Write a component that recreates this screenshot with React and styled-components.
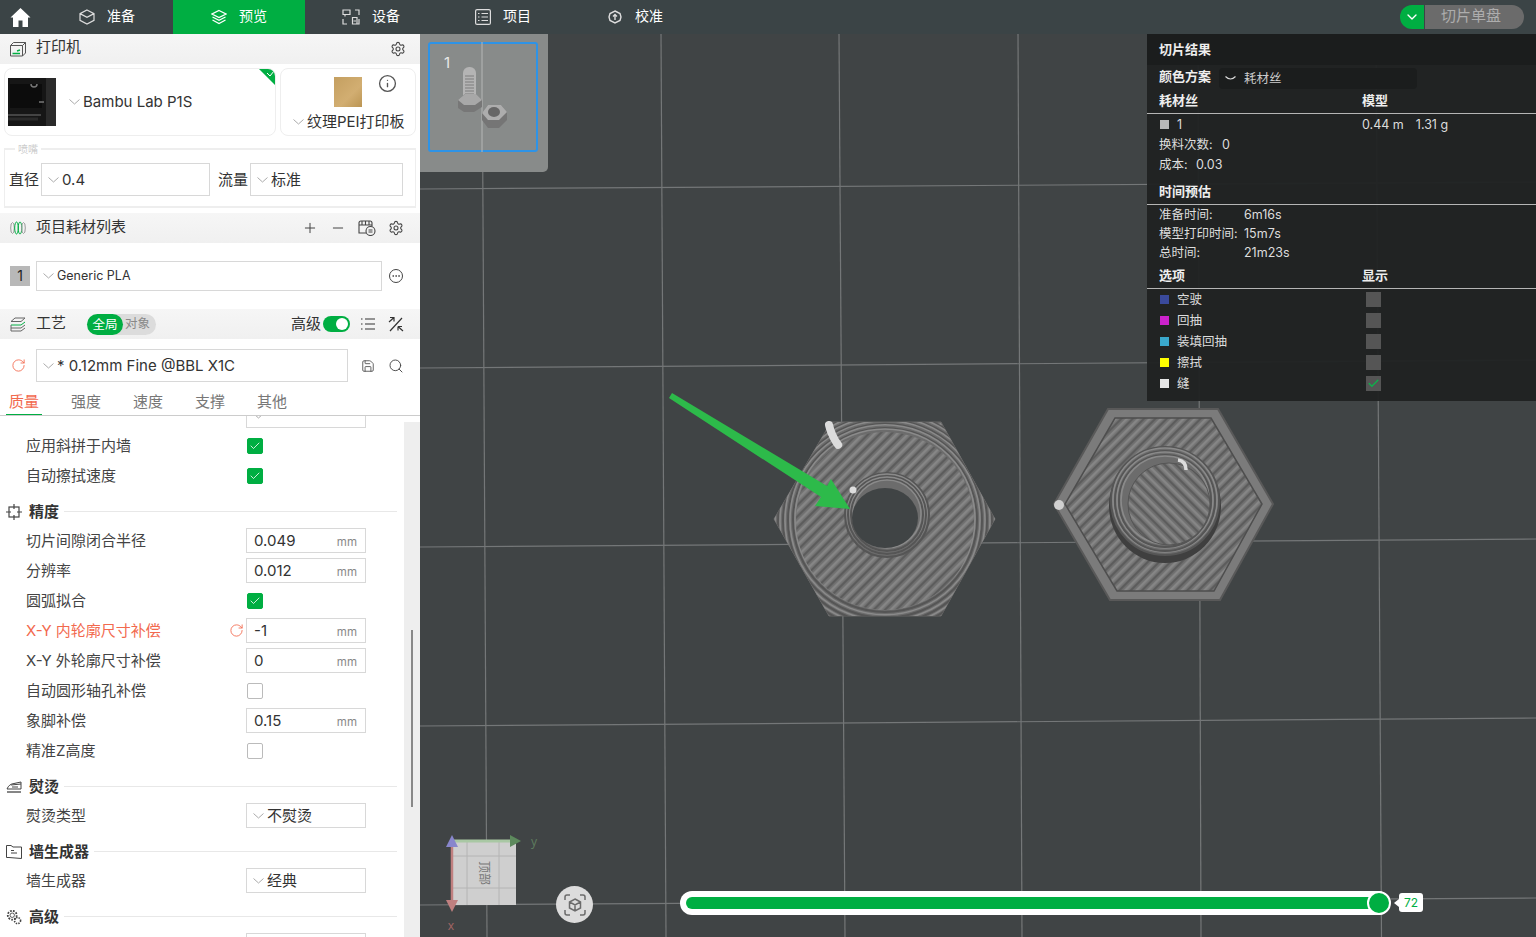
import React from 'react';
import styled, { createGlobalStyle } from 'styled-components';
import { Settings, Plus, Minus, Search, Save, Info, RotateCw, Check, ChevronDown, Ellipsis } from 'lucide-react';

const GREEN = '#00ae42';
const RED = '#f2694e';

const GlobalStyle = createGlobalStyle`
  html, body { margin: 0; padding: 0; height: 100%; overflow: hidden; background: #fff; }
  body { font-family: Inter, "Noto Sans CJK SC", sans-serif; font-size: 15px; line-height: 20px; color: #333; }
  * { box-sizing: border-box; }
`;

const Page = styled.div`
  width: 1536px;
  height: 937px;
  display: flex;
  flex-direction: column;
  overflow: hidden;
`;

/* top bar */
const TopBar = styled.div`
  height: 34px;
  flex: none;
  background: #3b4446;
  display: flex;
  align-items: stretch;
`;
const HomeButton = styled.div`
  width: 41px;
  display: flex;
  align-items: center;
  justify-content: center;
`;
const NavTab = styled.div`
  width: 132px;
  display: flex;
  align-items: center;
  justify-content: center;
  gap: 12px;
  color: #fff;
  font-size: 14px;
  background: ${(p) => (p.$active ? GREEN : 'transparent')};
`;
const NavLabel = styled.span`
  margin-bottom: 3px;
`;
const SliceGroup = styled.div`
  margin-left: auto;
  margin-right: 12px;
  display: flex;
  align-items: center;
  gap: 1px;
`;
const SliceArrow = styled.div`
  width: 24px;
  height: 24px;
  background: ${GREEN};
  border-radius: 12px 0 0 12px;
  display: flex;
  align-items: center;
  justify-content: center;
  color: #fff;
`;
const SliceButton = styled.div`
  width: 99px;
  height: 24px;
  background: #6b6b6b;
  border-radius: 0 12px 12px 0;
  color: #adadad;
  font-size: 15px;
  line-height: 22px;
  padding-left: 16px;
`;

const Body = styled.div`
  flex: 1;
  display: flex;
  min-height: 0;
`;

/* left panel */
const Sidebar = styled.div`
  width: 420px;
  flex: none;
  background: #fff;
  display: flex;
  flex-direction: column;
  overflow: hidden;
`;
const PanelHeader = styled.div`
  height: 30px;
  flex: none;
  margin-top: ${(p) => p.$top || 0}px;
  background: linear-gradient(#f6f6f6, #f0f0f0);
  display: flex;
  align-items: center;
  padding: 0 ${(p) => p.$right || 16}px 0 10px;
  color: #333;
`;
const HeaderTitle = styled.span`
  margin-left: 10px;
  margin-bottom: ${(p) => p.$lift || 2}px;
  font-size: 15px;
`;
const HeaderTools = styled.div`
  margin-left: auto;
  display: flex;
  align-items: center;
  gap: ${(p) => p.$gap || 12}px;
  color: #444;
`;

const CardRow = styled.div`
  display: flex;
  gap: 4px;
  padding: 0 4px;
  margin-top: 4px;
  height: 68px;
`;
const PrinterCard = styled.div`
  position: relative;
  width: 272px;
  border: 1px solid #eee;
  border-radius: 8px;
  display: flex;
  align-items: center;
  padding-left: 3px;
  overflow: hidden;
  font-size: 15px;
`;
const PrinterThumb = styled.svg`
  width: 48px;
  height: 48px;
  flex: none;
  margin-right: 13px;
`;
const CornerFlag = styled.svg`
  position: absolute;
  top: -1px;
  right: -1px;
`;
const PlateCard = styled.div`
  position: relative;
  width: 136px;
  border: 1px solid #eee;
  border-radius: 8px;
  display: flex;
  flex-direction: column;
  align-items: center;
  padding-top: 8px;
`;
const PlateSwatch = styled.div`
  width: 28px;
  height: 30px;
  background: linear-gradient(135deg, #c49f60, #d2ae72 60%, #bb9553);
`;
const PlateLabel = styled.div`
  margin-top: 5px;
  display: flex;
  align-items: center;
  align-self: flex-start;
  padding-left: 12px;
  line-height: 20px;
  white-space: nowrap;
`;
const InfoSpot = styled.div`
  position: absolute;
  top: 5px;
  right: 18px;
  color: #555;
  display: flex;
`;
const ChevronMark = styled.svg`
  width: 11px;
  height: 6px;
  flex: none;
  margin-right: 3px;
  fill: none;
  stroke: #aaa;
  stroke-width: 1;
`;
const Chevron = () => (
  <ChevronMark viewBox="0 0 11 6">
    <path d="M0.5 0.5 L5.5 5 L10.5 0.5" />
  </ChevronMark>
);

const Nozzle = styled.fieldset`
  margin: 8px 4px 0;
  padding: 0 0 0 4px;
  height: 64px;
  border: 1px solid #eee;
  border-width: 2px 1px 2px 1px;
`;
const NozzleLegend = styled.legend`
  margin-left: 6px;
  padding: 0 3px;
  font-size: 10px;
  line-height: 10px;
  color: #ccc;
`;
const NozzleRow = styled.div`
  display: flex;
  align-items: center;
  margin-top: 9px;
`;
const FieldLabel = styled.span`
  width: ${(p) => p.$w}px;
  padding-left: ${(p) => p.$pad || 0}px;
  flex: none;
  font-size: 15px;
  color: #333;
`;
const SelectBox = styled.div`
  width: ${(p) => p.$w}px;
  height: ${(p) => p.$h}px;
  flex: none;
  border: 1px solid #d8d8d8;
  display: flex;
  align-items: center;
  padding-left: ${(p) => p.$pad || 6}px;
  font-size: ${(p) => p.$size || 15}px;
  color: #333;
  white-space: nowrap;
`;

const FilamentRow = styled.div`
  height: 66px;
  flex: none;
  display: flex;
  align-items: center;
  padding-left: 10px;
`;
const FilamentIndex = styled.div`
  width: 20px;
  height: 20px;
  margin-right: 6px;
  background: #b8b8b8;
  text-align: center;
  line-height: 20px;
  font-size: 14px;
  color: #222;
`;
const MoreDot = styled.div`
  margin-left: 7px;
  width: 14px;
  height: 14px;
  border: 1.3px solid #444;
  border-radius: 50%;
  color: #444;
  display: flex;
  align-items: center;
  justify-content: center;
`;

const ModeSwitch = styled.div`
  margin-left: 21px;
  width: 69px;
  height: 21px;
  border-radius: 11px;
  background: #dcdcdc;
  display: flex;
  align-items: center;
  font-size: 12.5px;
  color: #888;
`;
const ModeActive = styled.span`
  width: 36px;
  height: 21px;
  line-height: 21px;
  text-align: center;
  border-radius: 11px;
  background: ${GREEN};
  color: #fff;
  margin-right: 2px;
`;
const AdvancedGroup = styled.div`
  display: flex;
  align-items: center;
  gap: 2px;
  margin-right: -2px;
`;
const ToggleTrack = styled.div`
  width: 27px;
  height: 16px;
  border-radius: 8px;
  background: ${GREEN};
  display: flex;
  align-items: center;
  justify-content: flex-end;
  padding-right: 2px;
`;
const ToggleKnob = styled.div`
  width: 12px;
  height: 12px;
  border-radius: 50%;
  background: #fff;
`;
const AdvancedLabel = styled.span`
  font-size: 15px;
  color: #333;
`;

const PresetRow = styled.div`
  height: 51px;
  flex: none;
  padding-top: 10px;
  display: flex;
  align-items: flex-start;
`;
const ResetSpot = styled.div`
  width: 36px;
  height: 33px;
  display: flex;
  align-items: center;
  justify-content: center;
  color: ${RED};
`;
const PresetTools = styled.div`
  height: 33px;
  display: flex;
  align-items: center;
  gap: 13px;
  margin-left: 13px;
  color: #444;
`;

const TabBar = styled.div`
  height: 26px;
  flex: none;
  display: flex;
  padding-left: 9px;
  gap: 32px;
  border-bottom: 1px solid #ccc;
`;
const SettingTab = styled.div`
  position: relative;
  font-size: 15px;
  line-height: 24px;
  color: ${(p) => (p.$active ? RED : '#777')};
  ${(p) =>
    p.$active &&
    `&::after {
      content: '';
      position: absolute;
      left: -3px;
      right: -3px;
      bottom: 0;
      height: 1px;
      background: ${GREEN};
    }`}
`;

const ScrollArea = styled.div`
  flex: 1;
  min-height: 0;
  display: flex;
  overflow: hidden;
`;
const OptionList = styled.div`
  width: 404px;
  flex: none;
  padding: 0 7px 0 6px;
  margin-top: -15.5px;
`;
const ScrollTrack = styled.div`
  width: 16px;
  flex: none;
  margin-top: 6px;
  background: #eee;
  padding: 208px 0 0 7px;
`;
const ScrollThumb = styled.div`
  width: 2px;
  height: 177px;
  background: #888;
`;
const SectionRow = styled.div`
  height: 35px;
  padding-top: 7px;
  display: flex;
  align-items: center;
  gap: 7px;
  font-size: 15px;
  font-weight: 700;
  color: #333;
`;
const SectionLine = styled.div`
  flex: 1;
  height: 1px;
  background: #e8e8e8;
  margin-left: -2px;
`;
const OptionRow = styled.div`
  height: 30px;
  padding-left: 20px;
  display: flex;
  align-items: center;
`;
const OptionLabel = styled.div`
  width: 200px;
  flex: none;
  font-size: 15px;
  color: ${(p) => (p.$changed ? RED : '#444')};
  white-space: nowrap;
`;
const ResetSlot = styled.div`
  width: 20px;
  flex: none;
  color: ${RED};
  display: flex;
  padding-left: 3px;
`;
const NumberBox = styled.div`
  width: 120px;
  height: 25px;
  border: 1px solid #d8d8d8;
  display: flex;
  align-items: center;
  justify-content: space-between;
  padding: 0 8px 0 7px;
  font-size: 15px;
  color: #333;
`;
const Unit = styled.span`
  font-size: 11.5px;
  color: #888;
  padding-top: 2px;
`;
const CheckBox = styled.div`
  width: 16px;
  height: 16px;
  margin-left: 1px;
  border-radius: 2px;
  border: 1px solid ${(p) => (p.$on ? GREEN : '#bbb')};
  background: ${(p) => (p.$on ? GREEN : '#fff')};
  color: #fff;
  display: flex;
  align-items: center;
  justify-content: center;
`;

/* viewport */
const Viewport = styled.div`
  position: relative;
  flex: 1;
  background: #404445;
  overflow: hidden;
`;
const SceneSvg = styled.svg`
  position: absolute;
  inset: 0;
  display: block;
`;
const PlateTray = styled.div`
  position: absolute;
  left: 0;
  top: 0;
  width: 128px;
  height: 138px;
  padding: 8px;
  background: #888b8a;
  border-radius: 0 0 5px 0;
`;
const PlateThumb = styled.div`
  position: relative;
  width: 110px;
  height: 110px;
  border: 2px solid #2e93e6;
  border-radius: 3px;
`;
const PlateNumber = styled.span`
  position: absolute;
  left: 14px;
  top: 9px;
  color: #e8e8e8;
  font-size: 15px;
  line-height: 20px;
`;
const PlateModels = styled.svg`
  position: absolute;
  inset: -2px;
`;

const ResultPanel = styled.div`
  position: absolute;
  right: 0;
  top: 0;
  width: 389px;
  height: 367px;
  background: rgba(32, 34, 34, 0.96);
  color: #ddd;
  font-size: 12.5px;
`;
const ResultTitle = styled.div`
  height: 31px;
  background: #1b1d1d;
  padding-left: 12px;
  line-height: 31px;
  font-size: 13px;
  font-weight: 700;
  color: #eee;
`;
const SchemeRow = styled.div`
  height: 24px;
  padding: 0 0 2px 12px;
  display: flex;
  align-items: center;
  font-size: 13px;
  font-weight: 700;
  color: #eee;
`;
const SchemeSelect = styled.div`
  width: 198px;
  height: 21px;
  margin-left: 8px;
  margin-top: 5px;
  border-radius: 4px;
  background: #1b1d1d;
  display: flex;
  align-items: center;
  gap: 8px;
  padding-left: 6px;
  font-size: 12.5px;
  font-weight: 400;
  color: #ccc;
`;
const ResultHead = styled.div`
  height: 25px;
  margin-top: ${(p) => p.$top || 0}px;
  padding: 0 0 2px 12px;
  display: grid;
  grid-template-columns: 203px 1fr;
  align-items: center;
  border-bottom: 1px solid #b5b5b5;
  font-size: 13px;
  font-weight: 700;
  color: #eee;
`;
const ResultRow = styled.div`
  height: ${(p) => p.$h || 19}px;
  padding-left: 12px;
  display: grid;
  grid-template-columns: ${(p) => p.$cols || '203px 1fr'};
  align-items: center;
  white-space: nowrap;
`;
const LegendCell = styled.div`
  display: flex;
  align-items: center;
`;
const LegendSwatch = styled.span`
  width: 9px;
  height: 9px;
  flex: none;
  margin: 0 8px 0 1px;
  background: ${(p) => p.$color};
`;
const ShowBox = styled.div`
  width: 15px;
  height: 15px;
  margin-left: 4px;
  background: #555;
  color: #0fb04c;
  display: flex;
  align-items: center;
  justify-content: center;
`;
const Amounts = styled.div`
  display: flex;
  gap: 12px;
`;

const CameraButton = styled.div`
  position: absolute;
  left: 136px;
  top: 852px;
  width: 37px;
  height: 37px;
  border-radius: 50%;
  background: #dcdcdc;
  display: flex;
  align-items: center;
  justify-content: center;
`;
const SliderTrack = styled.div`
  position: absolute;
  left: 260px;
  top: 857px;
  width: 710px;
  height: 24px;
  border-radius: 12px;
  background: #fff;
  padding: 6px;
`;
const SliderFill = styled.div`
  width: 693px;
  height: 12px;
  border-radius: 6px;
  background: ${GREEN};
`;
const SliderKnob = styled.div`
  position: absolute;
  left: 687px;
  top: 0;
  width: 24px;
  height: 24px;
  border-radius: 50%;
  border: 2px solid #fff;
  background: ${GREEN};
`;
const SliderTip = styled.div`
  position: absolute;
  left: 979px;
  top: 859px;
  width: 24px;
  height: 19px;
  border-radius: 3px;
  background: #fff;
  color: ${GREEN};
  font-size: 12px;
  line-height: 19px;
  text-align: center;
  &::before {
    content: '';
    position: absolute;
    left: -5px;
    top: 6px;
    border-style: solid;
    border-width: 4px 5px 4px 0;
    border-color: transparent #fff transparent transparent;
  }
`;

const line = { fill: 'none', stroke: 'currentColor', strokeWidth: 1.2 };

const CubeIcon = () => (
  <svg width="16" height="16" viewBox="0 0 16 16" {...line} color="#ddd">
    <path d="M8 1 L15 4.6 V11.4 L8 15 L1 11.4 V4.6 Z M1 4.6 L8 8.4 L15 4.6" />
  </svg>
);
const LayersIcon = () => (
  <svg width="16" height="16" viewBox="0 0 16 16" {...line} color="#fff">
    <path d="M8 1.5 L15 5 L8 8.5 L1 5 Z M1.5 8 L8 11.4 L14.5 8 M1.5 11 L8 14.5 L14.5 11" />
  </svg>
);
const DeviceIcon = () => (
  <svg width="18" height="16" viewBox="0 0 18 16" {...line} color="#ddd">
    <path d="M1 1 H8 V5.5 H1 Z M3 6 V7.5 M1 10 V15 H5 M13 1 H17 V6 M13 15 H17 V10 M10.5 8.5 H15 V15 H10.5 Z M11.5 12 H14" />
  </svg>
);
const ListIcon = () => (
  <svg width="16" height="16" viewBox="0 0 16 16" {...line} color="#ddd">
    <rect x="0.6" y="0.6" width="14.8" height="14.8" rx="1.5" />
    <path d="M3 4.5 H4.5 M6.5 4.5 H13 M3 8 H4.5 M6.5 8 H13 M3 11.5 H4.5 M6.5 11.5 H13" />
  </svg>
);
const CalibIcon = () => (
  <svg width="16" height="16" viewBox="0 0 16 16" {...line} color="#ddd">
    <path d="M8 2 L13 4.5 L14 8 L13 11.5 L8 14 L3 11.5 L2 8 L3 4.5 Z" strokeWidth="1.4" />
    <path d="M8 11 V6 M6 7.6 L8 5.6 L10 7.6" strokeWidth="1.4" />
  </svg>
);
const PrinterIcon = () => (
  <svg width="16" height="15" viewBox="0 0 16 15" fill="none" stroke="#555" strokeWidth="1">
    <path d="M0.5 3.5 H12.5 V14 H0.5 Z M0.5 3.5 L3.5 0.5 H15.5 V11 L12.5 14 M12.5 3.5 L15.5 0.5" />
    <path d="M2.5 11.5 H10 M7 9 L10 8" stroke={GREEN} strokeWidth="1.4" />
  </svg>
);
const SpoolIcon = () => (
  <svg width="16" height="14" viewBox="0 0 16 14" fill="none" strokeWidth="1">
    <ellipse cx="2.5" cy="7" rx="1.8" ry="5.5" stroke="#999" />
    <ellipse cx="6.5" cy="7" rx="1.8" ry="6" stroke={GREEN} />
    <ellipse cx="10" cy="7" rx="1.8" ry="6" stroke={GREEN} />
    <ellipse cx="13.5" cy="7" rx="1.8" ry="5.5" stroke="#999" />
  </svg>
);
const ProcessIcon = () => (
  <svg width="16" height="15" viewBox="0 0 16 15" fill="none" stroke="#666" strokeWidth="1">
    <path d="M1 4.5 L5 1 H15 L11 4.5 H1 Z" />
    <path d="M1 8 H11 L15 5" stroke={GREEN} />
    <path d="M1 11 H11 L15 8 M1 8 V14 H11 L15 11" />
  </svg>
);
const StockIcon = () => (
  <svg width="18" height="16" viewBox="0 0 18 16" fill="none" stroke="#444" strokeWidth="1.1">
    <path d="M8 13 H1 V3 Q1 1 3 1 H12 Q14 1 14 3 V6 M1 5 H14 M4 1 V5 M7.5 1 V5 M11 1 V5" />
    <circle cx="12.5" cy="11" r="4.5" />
    <path d="M10.5 10 H14.5 M10.5 12 H14.5" />
  </svg>
);
const LinesIcon = () => (
  <svg width="16" height="14" viewBox="0 0 16 14" fill="none" stroke="#333" strokeWidth="1.2">
    <path d="M1 2 H2.5 M5 2 H15 M1 7 H2.5 M5 7 H15 M1 12 H2.5 M5 12 H15" />
  </svg>
);
const CompareIcon = () => (
  <svg width="16" height="16" viewBox="0 0 16 16" fill="none" stroke="#333" strokeWidth="1.2">
    <path d="M2 1.5 H6 V5.5 M1 6 L6 1.5 M2 15 L14 2 M10 10.5 V14.5 M10 10.5 H14 M10 10.5 L15 15" />
  </svg>
);
const PrecisionIcon = () => (
  <svg width="16" height="16" viewBox="0 0 16 16" fill="none" stroke="#444" strokeWidth="1.2">
    <rect x="3" y="3" width="10" height="10" />
    <path d="M8 0 V5 M8 11 V16 M0 8 H5 M11 8 H16" />
  </svg>
);
const IronIcon = () => (
  <svg width="16" height="12" viewBox="0 0 16 12" fill="none" stroke="#444" strokeWidth="1">
    <path d="M1 8 Q3 3 8 2.5 L15 1 V8 Z M6 6 H12 M5 4 L15 3" />
    <path d="M1 11 H15" strokeWidth="1.3" />
  </svg>
);
const WallIcon = () => (
  <svg width="16" height="14" viewBox="0 0 16 14" fill="none" stroke="#444" strokeWidth="1">
    <path d="M0.5 0.5 H5 L7 2 H15.5 V13.5 L3 12.5 H0.5 Z M5 5.5 H8 M5 8 H11" />
  </svg>
);
const GearsIcon = () => (
  <svg width="16" height="16" viewBox="0 0 18 18" fill="none" stroke="#444">
    <circle cx="7" cy="7" r="5" strokeWidth="2" strokeDasharray="2 1.4" />
    <circle cx="7" cy="7" r="2.5" strokeWidth="1" />
    <circle cx="13" cy="13" r="3.4" strokeWidth="1.8" strokeDasharray="1.6 1.2" />
  </svg>
);
const SchemeChevron = () => (
  <svg width="11" height="5" viewBox="0 0 11 5" fill="none" stroke="#ddd" strokeWidth="1.1">
    <path d="M0.5 0.5 Q5.5 5.5 10.5 0.5" />
  </svg>
);

const Bambu = () => (
  <PrinterThumb viewBox="0 0 48 48">
    <rect width="48" height="48" fill="#161616" />
    <rect x="38" y="0" width="10" height="48" fill="#2b2b2b" />
    <rect x="2" y="6" width="32" height="24" fill="#0c0c0c" />
    <path d="M0 37 H33" stroke="#555" strokeWidth="1.5" />
    <path d="M23 6 a3 3 0 0 0 6 0 M31 24 h5" stroke="#777" strokeWidth="1.5" fill="none" />
    <path d="M0 41 H30" stroke="#2a2a2a" strokeWidth="3" />
  </PrinterThumb>
);

const hexPoints = (pts) => pts.map((p) => p.join(',')).join(' ');
const NUT_A = [[831, 422], [941, 422], [995, 519], [941, 616], [829, 616], [774, 519]];
const NUT_B = [[1108, 409], [1218, 409], [1273, 504], [1220, 600], [1110, 600], [1054, 504]];
const NUT_B_IN = [[1115, 418], [1211, 418], [1262, 504], [1214, 591], [1117, 591], [1065, 504]];

const GRID = [
  [420, 189, 1536, 182], [420, 368, 1536, 360], [420, 547, 1536, 539], [420, 726, 1536, 718], [420, 905, 1536, 898],
  [482, 34, 487, 937], [661, 34, 666, 937], [839, 34, 845, 937], [1018, 34, 1022, 937], [1198, 34, 1201, 937], [1376, 34, 1381.5, 937],
];

const StripeDef = ({ id, angle }) => (
  <pattern id={id} width="8" height="8" patternUnits="userSpaceOnUse" patternTransform={`rotate(${angle})`}>
    <rect width="8" height="8" fill="#727272" />
    <rect y="0" width="8" height="2.2" fill="#5c5c5c" />
    <rect y="4" width="8" height="2.4" fill="#868686" />
  </pattern>
);

const Rings = ({ cx, cy, from, to, step = 5, drop = 0 }) => {
  const out = [];
  for (let r = to, i = Math.round((to - from) / step); r >= from; r -= step, i--) {
    out.push(
      <g key={r}>
        <circle cx={cx} cy={cy + i * drop} r={r} fill="#6c6c6c" stroke="#555" strokeWidth="2" />
        <circle cx={cx} cy={cy + i * drop - 1} r={r - 2} fill="none" stroke="#8a8a8a" strokeWidth="1.6" />
      </g>
    );
  }
  return out;
};

const Scene = () => (
  <SceneSvg width="1116" height="903" viewBox="420 34 1116 903">
    <defs>
      <StripeDef id="diagA" angle={-45} />
      <StripeDef id="diagB" angle={45} />
      <clipPath id="nutAclip"><polygon points={hexPoints(NUT_A)} /></clipPath>
    </defs>
    {GRID.map(([a, b, c, d]) => (
      <line key={`${a}-${b}`} x1={a} y1={b} x2={c} y2={d} stroke="#747778" strokeWidth="1.2" />
    ))}

    <polygon points={hexPoints(NUT_A)} fill="url(#diagA)" stroke="#666" />
    <g clipPath="url(#nutAclip)">
      <Rings cx={885} cy={520} from={92} to={112} drop={0.8} />
    </g>
    <circle cx="885" cy="521" r="89" fill="url(#diagA)" />
    <Rings cx={887} cy={515} from={35} to={42} step={3} />
    <ellipse cx="885" cy="518" rx="33" ry="30" fill="#404445" />
    <path d="M829 425 Q832 437 839 446" stroke="#dcdcdc" strokeWidth="8" strokeLinecap="round" strokeDasharray="4 2" fill="none" />
    <circle cx="853" cy="490" r="3.5" fill="#ddd" />

    <polygon points={hexPoints(NUT_B)} fill="#7b7b7b" stroke="#595959" strokeWidth="2" />
    <polygon points={hexPoints(NUT_B_IN)} fill="url(#diagA)" stroke="#4e4e4e" strokeWidth="1.5" />
    <ellipse cx="1165" cy="506" rx="56" ry="57" fill="#3f3f3f" />
    <Rings cx={1165} cy={501} from={44} to={54} step={4} />
    <ellipse cx="1169" cy="504" rx="41" ry="41" fill="url(#diagB)" stroke="#555" />
    <path d="M1178 460 Q1186 461 1186 470" stroke="#ddd" strokeWidth="3.5" fill="none" />
    <circle cx="1059" cy="505" r="5" fill="#d0d0d0" />

    <polygon points="672,393 827,486 831,479 850,509 815,506 821,497 669,398" fill="#2dba4a" />

    <rect x="453" y="840" width="63" height="65" fill="#cfcfcf" />
    <path d="M467 841 V905 M499 841 V905 M453 856 H516 M453 888 H516" stroke="#b4b4b4" />
    <text transform="translate(480 873) rotate(90)" textAnchor="middle" fontSize="12" fill="#777" fontFamily="Noto Sans CJK SC, sans-serif">顶部</text>
    <path d="M453 841 H512" stroke="#a9c8a4" strokeWidth="3" />
    <polygon points="510,835 521,841 510,847" fill="#5d8a5d" />
    <path d="M452 846 V905" stroke="#c08080" strokeWidth="2.5" />
    <polygon points="446,847 452,835 458,847" fill="#8886cc" />
    <polygon points="446,900 458,900 452,912" fill="#c08080" />
    <text x="451" y="930" textAnchor="middle" fontSize="12" fill="#a06464" fontFamily="Noto Sans, sans-serif">x</text>
    <text x="534" y="846" textAnchor="middle" fontSize="12" fill="#5d7a5d" fontFamily="Noto Sans, sans-serif">y</text>
  </SceneSvg>
);

const ThumbModels = () => (
  <PlateModels width="110" height="110" viewBox="428 42 110 110">
    <path d="M482 42 V152" stroke="#b5b7b6" strokeWidth="1" />
    <rect x="463" y="67" width="13" height="34" rx="6" fill="#b4b4b4" />
    <path d="M465 76 H474 M465 79 H474 M465 82 H474 M465 85 H474 M465 88 H474 M465 91 H474 M465 94 H474" stroke="#7d7d7d" strokeWidth="1" />
    <path d="M458 100 L465 94 H476 L482 100 V107 L474 112 H464 L458 108 Z" fill="#777" />
    <path d="M458 100 L465 94 H476 L482 100 L475 105 H464 Z" fill="#a8a8a8" />
    <path d="M482 113 L488 105 H501 L507 112 V120 L499 128 H488 L482 120 Z" fill="#757575" />
    <path d="M482 113 L488 105 H501 L507 112 L499 120 H488 Z" fill="#adadad" />
    <ellipse cx="494" cy="112" rx="6" ry="5" fill="#666" />
  </PlateModels>
);

const OPTIONS = [
  { kind: 'select', label: '', value: '' },
  { kind: 'check', label: '应用斜拼于内墙', on: true },
  { kind: 'check', label: '自动擦拭速度', on: true },
  { kind: 'section', label: '精度', icon: <PrecisionIcon /> },
  { kind: 'num', label: '切片间隙闭合半径', value: '0.049' },
  { kind: 'num', label: '分辨率', value: '0.012' },
  { kind: 'check', label: '圆弧拟合', on: true },
  { kind: 'num', label: 'X-Y 内轮廓尺寸补偿', value: '-1', changed: true },
  { kind: 'num', label: 'X-Y 外轮廓尺寸补偿', value: '0' },
  { kind: 'check', label: '自动圆形轴孔补偿', on: false },
  { kind: 'num', label: '象脚补偿', value: '0.15' },
  { kind: 'check', label: '精准Z高度', on: false },
  { kind: 'section', label: '熨烫', icon: <IronIcon /> },
  { kind: 'select', label: '熨烫类型', value: '不熨烫' },
  { kind: 'section', label: '墙生成器', icon: <WallIcon /> },
  { kind: 'select', label: '墙生成器', value: '经典' },
  { kind: 'section', label: '高级', icon: <GearsIcon /> },
  { kind: 'select', label: '', value: '' },
];

const Option = ({ item }) => {
  if (item.kind === 'section') {
    return (
      <SectionRow>
        {item.icon}
        <span>{item.label}</span>
        <SectionLine />
      </SectionRow>
    );
  }
  return (
    <OptionRow>
      <OptionLabel $changed={item.changed}>{item.label}</OptionLabel>
      <ResetSlot>{item.changed && <RotateCw size={15} strokeWidth={1.4} />}</ResetSlot>
      {item.kind === 'check' && (
        <CheckBox $on={item.on}>{item.on && <Check size={12} strokeWidth={1.6} />}</CheckBox>
      )}
      {item.kind === 'num' && (
        <NumberBox>
          <span>{item.value}</span>
          <Unit>mm</Unit>
        </NumberBox>
      )}
      {item.kind === 'select' && (
        <SelectBox $w={120} $h={25} $pad={6}>
          <Chevron />
          {item.value}
        </SelectBox>
      )}
    </OptionRow>
  );
};

const LEGEND = [
  { label: '空驶', color: '#3a4a9c' },
  { label: '回抽', color: '#cc22cc' },
  { label: '装填回抽', color: '#3aa8cc' },
  { label: '擦拭', color: '#ffff00' },
  { label: '缝', color: '#e6e6e6', on: true },
];

export default function App() {
  return (
    <Page>
      <GlobalStyle />
      <TopBar>
        <HomeButton>
          <svg width="21" height="21" viewBox="0 0 21 21" fill="#fff">
            <path d="M10.5 1 L0.5 10.5 H3 V20 H8.5 V13.5 H12.5 V20 H18 V10.5 H20.5 Z" />
          </svg>
        </HomeButton>
        <NavTab><CubeIcon /><NavLabel>准备</NavLabel></NavTab>
        <NavTab $active><LayersIcon /><NavLabel>预览</NavLabel></NavTab>
        <NavTab><DeviceIcon /><NavLabel>设备</NavLabel></NavTab>
        <NavTab><ListIcon /><NavLabel>项目</NavLabel></NavTab>
        <NavTab><CalibIcon /><NavLabel>校准</NavLabel></NavTab>
        <SliceGroup>
          <SliceArrow><ChevronDown size={16} strokeWidth={2} /></SliceArrow>
          <SliceButton>切片单盘</SliceButton>
        </SliceGroup>
      </TopBar>
      <Body>
        <Sidebar>
          <PanelHeader $right={14}>
            <PrinterIcon />
            <HeaderTitle $lift={4}>打印机</HeaderTitle>
            <HeaderTools><Settings size={16} strokeWidth={1.6} /></HeaderTools>
          </PanelHeader>
          <CardRow>
            <PrinterCard>
              <Bambu />
              <Chevron />
              Bambu Lab P1S
              <CornerFlag width="18" height="18" viewBox="0 0 18 18">
                <polygon points="0,0 18,0 18,18" fill={GREEN} />
                <path d="M9 5 L12 8 L16 3" fill="none" stroke="#fff" strokeWidth="1" />
              </CornerFlag>
            </PrinterCard>
            <PlateCard>
              <PlateSwatch />
              <PlateLabel><Chevron />纹理PEI打印板</PlateLabel>
              <InfoSpot><Info size={19} strokeWidth={1.7} /></InfoSpot>
            </PlateCard>
          </CardRow>
          <Nozzle>
            <NozzleLegend>喷嘴</NozzleLegend>
            <NozzleRow>
              <FieldLabel $w={32}>直径</FieldLabel>
              <SelectBox $w={169} $h={33}><Chevron />0.4</SelectBox>
              <FieldLabel $w={40} $pad={8}>流量</FieldLabel>
              <SelectBox $w={153} $h={33}><Chevron />标准</SelectBox>
            </NozzleRow>
          </Nozzle>
          <PanelHeader $top={5}>
            <SpoolIcon />
            <HeaderTitle>项目耗材列表</HeaderTitle>
            <HeaderTools $gap={12}>
              <Plus size={16} strokeWidth={1.5} />
              <Minus size={16} strokeWidth={1.5} />
              <StockIcon />
              <Settings size={16} strokeWidth={1.6} />
            </HeaderTools>
          </PanelHeader>
          <FilamentRow>
            <FilamentIndex>1</FilamentIndex>
            <SelectBox $w={346} $h={30} $size={12.5}><Chevron />Generic PLA</SelectBox>
            <MoreDot><Ellipsis size={10} strokeWidth={2} /></MoreDot>
          </FilamentRow>
          <PanelHeader>
            <ProcessIcon />
            <HeaderTitle>工艺</HeaderTitle>
            <ModeSwitch>
              <ModeActive>全局</ModeActive>
              对象
            </ModeSwitch>
            <HeaderTools $gap={12}>
              <AdvancedGroup>
                <AdvancedLabel>高级</AdvancedLabel>
                <ToggleTrack><ToggleKnob /></ToggleTrack>
              </AdvancedGroup>
              <LinesIcon />
              <CompareIcon />
            </HeaderTools>
          </PanelHeader>
          <PresetRow>
            <ResetSpot><RotateCw size={15} strokeWidth={1.4} /></ResetSpot>
            <SelectBox $w={312} $h={33}><Chevron />* 0.12mm Fine @BBL X1C</SelectBox>
            <PresetTools>
              <Save size={14} strokeWidth={1.4} />
              <Search size={16} strokeWidth={1.4} />
            </PresetTools>
          </PresetRow>
          <TabBar>
            <SettingTab $active>质量</SettingTab>
            <SettingTab>强度</SettingTab>
            <SettingTab>速度</SettingTab>
            <SettingTab>支撑</SettingTab>
            <SettingTab>其他</SettingTab>
          </TabBar>
          <ScrollArea>
            <OptionList>
              {OPTIONS.map((item, i) => (
                <Option key={i} item={item} />
              ))}
            </OptionList>
            <ScrollTrack><ScrollThumb /></ScrollTrack>
          </ScrollArea>
        </Sidebar>
        <Viewport>
          <Scene />
          <PlateTray>
            <PlateThumb>
              <ThumbModels />
              <PlateNumber>1</PlateNumber>
            </PlateThumb>
          </PlateTray>
          <ResultPanel>
            <ResultTitle>切片结果</ResultTitle>
            <SchemeRow>
              颜色方案
              <SchemeSelect><SchemeChevron />耗材丝</SchemeSelect>
            </SchemeRow>
            <ResultHead><span>耗材丝</span><span>模型</span></ResultHead>
            <ResultRow $h={21}>
              <LegendCell><LegendSwatch $color="#b8b8b8" />1</LegendCell>
              <Amounts><span>0.44 m</span><span>1.31 g</span></Amounts>
            </ResultRow>
            <ResultRow $h={20} $cols="63px 1fr"><span>换料次数:</span><span>0</span></ResultRow>
            <ResultRow $cols="37px 1fr"><span>成本:</span><span>0.03</span></ResultRow>
            <ResultHead $top={6}><span>时间预估</span></ResultHead>
            <ResultRow $cols="85px 1fr"><span>准备时间:</span><span>6m16s</span></ResultRow>
            <ResultRow $cols="85px 1fr"><span>模型打印时间:</span><span>15m7s</span></ResultRow>
            <ResultRow $cols="85px 1fr"><span>总时间:</span><span>21m23s</span></ResultRow>
            <ResultHead $top={2}><span>选项</span><span>显示</span></ResultHead>
            {LEGEND.map((row) => (
              <ResultRow key={row.label} $h={21}>
                <LegendCell><LegendSwatch $color={row.color} />{row.label}</LegendCell>
                <ShowBox>{row.on && <Check size={13} strokeWidth={2.6} />}</ShowBox>
              </ResultRow>
            ))}
          </ResultPanel>
          <CameraButton>
            <svg width="22" height="22" viewBox="0 0 22 22" fill="none" stroke="#6b6b6b" strokeWidth="1.5">
              <path d="M1 6 V3 Q1 1 3 1 H6 M16 1 H19 Q21 1 21 3 V6 M21 16 V19 Q21 21 19 21 H16 M6 21 H3 Q1 21 1 19 V16" />
              <path d="M11 5 L16.5 8 V14 L11 17 L5.5 14 V8 Z M5.5 8 L11 11 L16.5 8 M11 11 V17" />
            </svg>
          </CameraButton>
          <SliderTrack>
            <SliderFill />
            <SliderKnob />
          </SliderTrack>
          <SliderTip>72</SliderTip>
        </Viewport>
      </Body>
    </Page>
  );
}
